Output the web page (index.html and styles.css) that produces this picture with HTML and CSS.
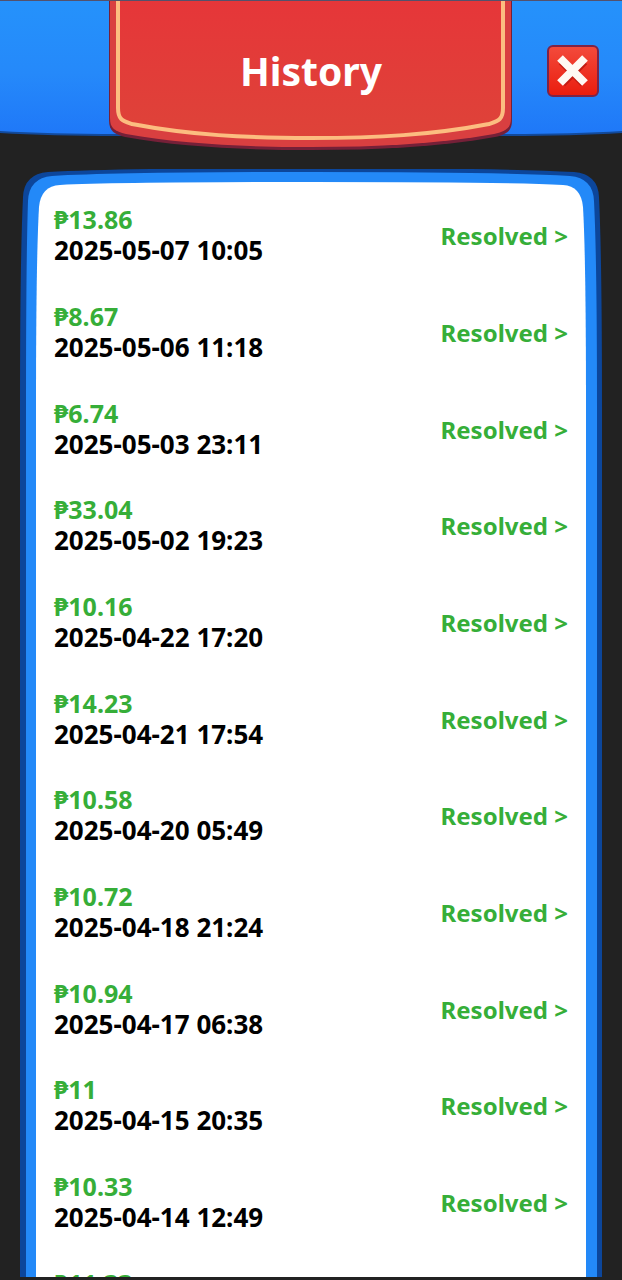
FILE: index.html
```html
<!DOCTYPE html>
<html lang="en">
  <head>
    <meta charset="UTF-8" />
    <meta name="viewport" content="width=device-width, initial-scale=1.0" />
    <title>History</title>
    <link rel="stylesheet" href="styles.css">
  </head>
  <body>
    <header class="header">
      <svg class="art" viewBox="0 0 622 160" preserveAspectRatio="none" aria-hidden="true">
        <defs>
          <linearGradient id="sky" x1="0" y1="0" x2="0" y2="1">
            <stop offset="0" stop-color="#2592fb" />
            <stop offset="0.55" stop-color="#2589fa" />
            <stop offset="1" stop-color="#1f78f8" />
          </linearGradient>
          <linearGradient id="banner" x1="0" y1="0" x2="0" y2="1">
            <stop offset="0" stop-color="#e63639" />
            <stop offset="1" stop-color="#de4339" />
          </linearGradient>
        </defs>
        <path d="M0 0H622V133Q570 136 500 136H120Q50 136 0 133Z" fill="#124a9c" />
        <path d="M0 0H622V131Q570 134 500 134H120Q50 134 0 131Z" fill="url(#sky)" />
        <path d="M109 0V120C109 132 115 134 125 137C180 147 245 150 311 150C377 150 440 147 495 137C506 134 512 132 512 120V0Z" fill="#752038" />
        <path d="M110 0V118C110 129 115 131 126 134C182 144 245 147 311 147C377 147 438 144 494 134C505 131 511 129 511 118V0Z" fill="#d93f40" />
        <path d="M118 0V108C118 120 123 121 132 124C190 135 245 138 311 138C377 138 432 135 489 124C498 121 503 120 503 108V0" fill="url(#banner)" stroke="#fcbd80" stroke-width="4" />
        <path d="M0 0H622" stroke="#54516b" stroke-width="2" />
      </svg>
      <h1 class="title">History</h1>
      <button class="close" type="button" aria-label="Close">
        <svg viewBox="0 0 52 52" width="52" height="52" aria-hidden="true">
          <defs>
            <linearGradient id="red" x1="0" y1="0" x2="0" y2="1">
              <stop offset="0" stop-color="#f34b3c" />
              <stop offset="1" stop-color="#ea1c0d" />
            </linearGradient>
          </defs>
          <rect x="1" y="1" width="50" height="50" rx="5" fill="url(#red)" stroke="#7c2448" stroke-width="2" />
          <path d="M15 16L37 38M37 16L15 38" stroke="#c41c12" stroke-width="9" />
          <path d="M13 13L38 38M38 13L13 38" stroke="#fff9f3" stroke-width="8" />
        </svg>
      </button>
    </header>

    <main class="panel">
      <svg class="art" viewBox="0 0 622 1110" preserveAspectRatio="none" aria-hidden="true">
        <path d="M20 1110V240Q20 90 23 28Q24 5 48 3Q120 -1 311 -1Q500 -1 574 3Q598 5 599 28Q602 90 602 240V1110Z" fill="#0c469b" />
        <path d="M26 1110V240Q26 90 28 32Q29 9 52 7Q120 3 311 3Q500 3 570 7Q593 9 594 32Q597 90 597 240V1110Z" fill="#2389f8" />
        <path d="M36 1110V240Q36 90 39 38Q41 17 60 16Q120 13 311 13Q500 13 563 16Q581 17 583 38Q586 90 586 240V1110Z" fill="#fff" />
      </svg>
      <ul class="list">
        <li class="row">
          <div><p class="amount">₱13.86</p><time class="date">2025-05-07 10:05</time></div>
          <a class="status" href="#">Resolved &gt;</a>
        </li>
        <li class="row">
          <div><p class="amount">₱8.67</p><time class="date">2025-05-06 11:18</time></div>
          <a class="status" href="#">Resolved &gt;</a>
        </li>
        <li class="row">
          <div><p class="amount">₱6.74</p><time class="date">2025-05-03 23:11</time></div>
          <a class="status" href="#">Resolved &gt;</a>
        </li>
        <li class="row">
          <div><p class="amount">₱33.04</p><time class="date">2025-05-02 19:23</time></div>
          <a class="status" href="#">Resolved &gt;</a>
        </li>
        <li class="row">
          <div><p class="amount">₱10.16</p><time class="date">2025-04-22 17:20</time></div>
          <a class="status" href="#">Resolved &gt;</a>
        </li>
        <li class="row">
          <div><p class="amount">₱14.23</p><time class="date">2025-04-21 17:54</time></div>
          <a class="status" href="#">Resolved &gt;</a>
        </li>
        <li class="row">
          <div><p class="amount">₱10.58</p><time class="date">2025-04-20 05:49</time></div>
          <a class="status" href="#">Resolved &gt;</a>
        </li>
        <li class="row">
          <div><p class="amount">₱10.72</p><time class="date">2025-04-18 21:24</time></div>
          <a class="status" href="#">Resolved &gt;</a>
        </li>
        <li class="row">
          <div><p class="amount">₱10.94</p><time class="date">2025-04-17 06:38</time></div>
          <a class="status" href="#">Resolved &gt;</a>
        </li>
        <li class="row">
          <div><p class="amount">₱11</p><time class="date">2025-04-15 20:35</time></div>
          <a class="status" href="#">Resolved &gt;</a>
        </li>
        <li class="row">
          <div><p class="amount">₱10.33</p><time class="date">2025-04-14 12:49</time></div>
          <a class="status" href="#">Resolved &gt;</a>
        </li>
        <li class="row">
          <div><p class="amount">₱11.33</p></div>
        </li>
      </ul>
    </main>
  </body>
</html>
```
FILE: styles.css
```css
* {
  box-sizing: border-box;
}

body {
  font-family: "Noto Sans", sans-serif;
  display: flex;
  flex-direction: column;
  height: 100vh;
  margin: 0;
  padding-bottom: 3px;
  background-color: #222222;
  overflow: hidden;
}

/* stretched artwork behind the content */
.art {
  position: absolute;
  top: 0;
  left: 0;
  width: 100%;
  height: 100%;
  z-index: -1;
}

.header {
  position: relative;
  z-index: 0;
  flex: none;
  display: grid;
  grid-template-columns: 1fr auto 1fr;
  align-items: center;
  height: 160px;
  padding: 0 23px 18px;
}

.title {
  grid-column: 2;
  margin: 0;
  font-size: 39px;
  line-height: 48px;
  font-weight: 700;
  color: white;
}

.close {
  justify-self: end;
  display: block;
  padding: 0;
  border: none;
  background: none;
  cursor: pointer;
}

.close svg {
  display: block;
}

.panel {
  position: relative;
  z-index: 0;
  flex: 1;
  min-height: 0;
  margin-top: 9px;
  padding: 35px 54px 0;
  overflow: hidden;
}

.list {
  margin: 0;
  padding: 0;
  list-style: none;
}

.row {
  display: flex;
  justify-content: space-between;
  align-items: center;
  margin-bottom: 35px;
  line-height: 31px;
  font-weight: 700;
}

.row:nth-child(3n) {
  margin-bottom: 34px;
}

.amount {
  margin: 0;
  font-size: 25px;
  color: #36ae38;
}

.date {
  display: block;
  font-size: 26px;
  color: black;
}

.status {
  font-size: 24px;
  color: #36ae38;
  text-decoration: none;
}
```
